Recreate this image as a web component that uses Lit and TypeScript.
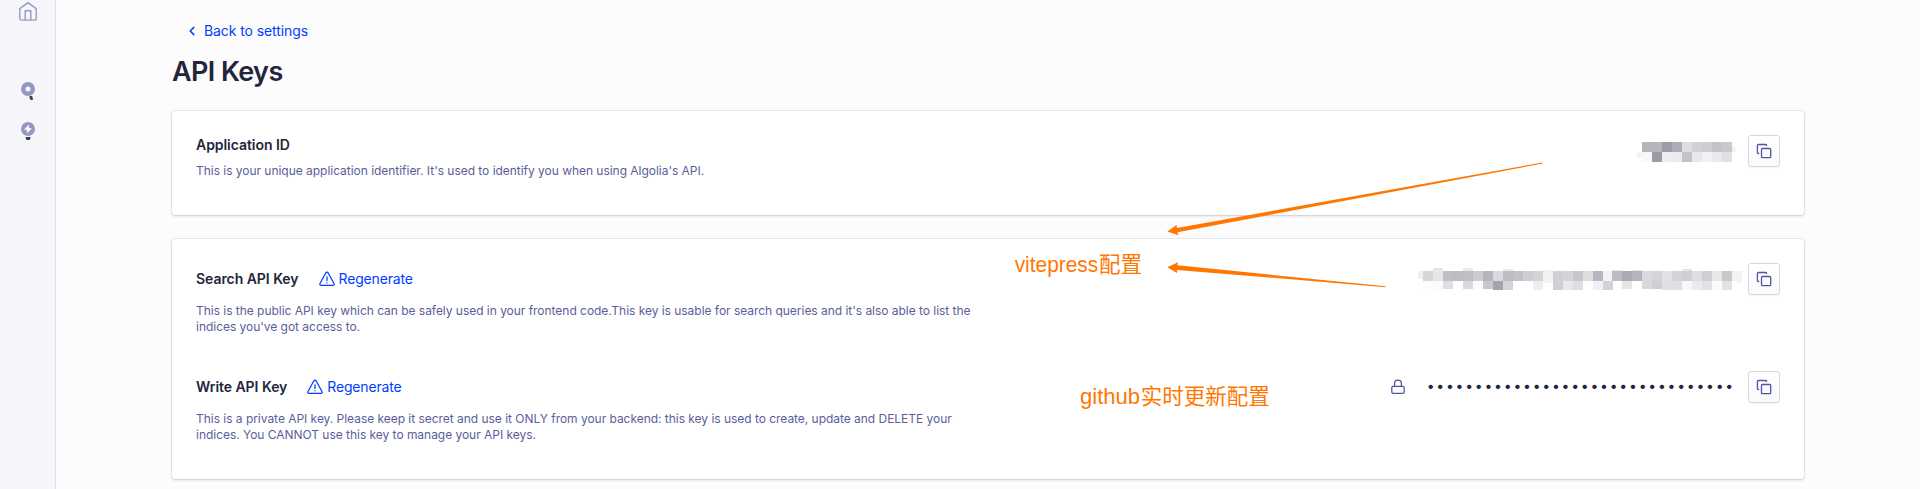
import { LitElement, html, svg, css } from "lit";
import { customElement, property } from "lit/decorators.js";

type Cell = [x: number, y: number, w: number, h: number, fill: string];

const row = (x: number, y: number, h: number, fills: string): Cell[] =>
  fills
    .split(" ")
    .map((f, i): Cell => [x + i * 10, y, 10, h, f])
    .filter((c) => c[4] !== "-")
    .map((c): Cell => [c[0], c[1], c[2], c[3], "#" + c[4]]);

const APP_ID_CELLS: Cell[] = [
  ...row(5, 0, 10, "b5b6bb b6b6c2 9c9ba8 adadb7 dedee1 d0d0d5 cdcdd2 c3c3c9 cacace"),
  ...row(5, 10, 9.5, "f8f8f8 9b9ba8 ededef ebebee c2c3c8 e8e8eb f1f1f3 eaeaed e0e0e2"),
  [0, 10, 5, 6, "#f4f4f4"],
  [95, 4, 3, 6, "#f0f0f0"],
  [98, 8, 2, 2, "#f4f4f4"],
];

const SEARCH_KEY_CELLS: Cell[] = [
  [0, 3, 5, 8, "#efeff0"],
  ...row(5, 3, 10, "d5d6da e5e6e8 bfc0c6 bcbdc4 bebfc4 cbccd0 b5b5bf d9d8de bdbec3 c2c1c9 cdced2 d3d4d8 f2f2f2 cfcfd4 d4d4d8 c6c7cb dcddde b7b7c2 f0f2f4"),
  ...row(194, 3, 10, "bbbcc2 abaab5 b5b4be d9d9de d3d4d8 e2e2e4 d3d2d8 cfcfd4 dedee0 cfcfd3 e8e8ea c8c8cd f3f3f3"),
  ...row(5, 13, 8, "fcfcfc fafafa dedfe1 - d8d8dd fcfcfc c8c7cd"),
  ...row(75, 13, 9, "a3a2ae d4d3d9 - - eeeef0 - cfcfd4 e8e8ea dddee0 - eff0f2 d2d2d7"),
  ...row(204, 13, 8, "e6e6e9 - d8d8dc cdcdd2"),
  ...row(244, 13, 9, "e0e0e2 dfdfe1 f9f9f9 ebebec e2e2e5 fafafa e2e2e4"),
  [15, 0, 10, 3, "#e5e6e8"],
  [45, 0, 10, 3, "#e9e9eb"],
  [85, 1, 10, 2, "#ebebed"],
  [125, 2, 10, 1, "#f4f4f4"],
  [125, 13, 10, 2, "#f4f4f4"],
  [194, 2, 10, 1, "#e4e4e6"],
  [214, 2, 10, 1, "#e4e4e6"],
  [264, 1, 10, 2, "#e6e6e8"],
  [319, 13, 5, 2, "#f8f8f8"],
];

const copyIcon = svg`<svg class="icon" width="16" height="16" viewBox="0 0 16 16" fill="none" stroke="#5055a0" stroke-width="1.3" stroke-linejoin="round" stroke-linecap="round">
  <rect x="5.500" y="5.500" width="9.200" height="9.200" rx="1"/>
  <path d="M2.700 10.500H2.400A1 1 0 0 1 1.400 9.500V2.500A1 1 0 0 1 2.400 1.500h7.200a1 1 0 0 1 1 1"/></svg>`;

const warnIcon = svg`<svg class="icon" width="16" height="16" viewBox="0 0 16 16" fill="none" stroke="#003dff" stroke-width="1.25" stroke-linejoin="round" stroke-linecap="round">
  <path d="M6.900 1.800 1 12.500a1.200 1.200 0 0 0 1 1.900h12a1.200 1.200 0 0 0 1-1.900L9.100 1.800a1.300 1.300 0 0 0-2.200 0zM8 5.800v3.600M8 11.700v.1"/></svg>`;

const lockIcon = svg`<svg class="icon" width="16" height="16" viewBox="0 0 16 16" fill="none" stroke="#5055a0" stroke-width="1.25" stroke-linejoin="round" stroke-linecap="round">
  <rect x="1.800" y="7.300" width="12.400" height="7.100" rx="1.300"/><path d="M4.600 7.300V4.400a3.400 3.400 0 0 1 6.800 0v2.900"/></svg>`;

@customElement("pixel-mask")
class PixelMask extends LitElement {
  @property({ attribute: false }) cells: Cell[] = [];
  @property({ type: Number }) w = 100;
  @property({ type: Number }) h = 20;
  static styles = css`
    :host { display: block; }
    svg { display: block; }
  `;
  render() {
    return html`<svg width=${this.w} height=${this.h} shape-rendering="crispEdges">
      ${this.cells.map((c) => svg`<rect x=${c[0]} y=${c[1]} width=${c[2]} height=${c[3]} fill=${c[4]}/>`)}
    </svg>`;
  }
}

@customElement("app-root")
class AppRoot extends LitElement {
  static styles = css`
    :host {
      display: flex;
      position: relative;
      width: 1920px;
      height: 489px;
      overflow: hidden;
      background: #fcfcfd;
      font-family: Inter, "Noto Sans CJK SC", sans-serif;
      color: #23263b;
    }
    * { box-sizing: border-box; }
    svg { display: block; flex: none; }
    .side {
      width: 56px;
      flex: none;
      background: #f5f5fa;
      border-right: 1px solid #dfdfeb;
      display: flex;
      flex-direction: column;
      align-items: center;
      padding-top: 1px;
    }
    .home { margin-bottom: 60px; }
    .magnify { margin-bottom: 20px; }
    main { flex: 1; padding: 20px 0 0 116px; }
    .back {
      display: flex;
      align-items: center;
      gap: 8px;
      height: 22px;
      padding-left: 16px;
      font-size: 14px;
      line-height: 20px;
      letter-spacing: -0.09px;
      color: #003dff;
    }
    .back span { padding-bottom: 1px; }
    h1 {
      margin: 13px 0 22px;
      font-size: 27px;
      line-height: 34px;
      font-weight: 600;
      letter-spacing: -0.6px;
    }
    .card {
      width: 1632px;
      background: #fff;
      border-radius: 3px;
      box-shadow: 0 0 0 1px rgba(35, 38, 59, 0.06), 0 1px 3px rgba(35, 38, 59, 0.18);
      padding: 0 24px;
      margin-bottom: 24px;
    }
    .app { height: 104px; padding-top: 24px; }
    .keys { height: 240px; padding-top: 24px; }
    .row { display: flex; height: 108px; }
    .info { width: 780px; }
    .head { display: flex; align-items: center; height: 32px; }
    .app .head { height: 20px; }
    h2 { margin: 0; font-size: 14px; line-height: 20px; font-weight: 600; letter-spacing: -0.05px; }
    .regen {
      display: flex;
      align-items: center;
      gap: 4px;
      margin-left: 20px;
      color: #003dff;
      font-size: 14px;
      line-height: 20px;
      letter-spacing: -0.16px;
    }
    p { margin: 8px 0 0; font-size: 12px; line-height: 16px; letter-spacing: -0.031px; color: #5a5e9a; white-space: nowrap; }
    .value { margin-left: auto; height: 32px; display: flex; align-items: center; }
    .copy {
      width: 32px;
      height: 32px;
      border: 1px solid #d6d6e7;
      border-radius: 3px;
      background: linear-gradient(#fff, #fafafd);
      box-shadow: 0 1px 1px rgba(35, 38, 59, 0.05);
      display: grid;
      place-items: center;
      padding: 0;
    }
    .id-mask { margin-right: 11px; padding-top: 2px; }
    .key-mask { margin-right: 5px; padding-top: 1px; }
    .dots { font-size: 14px; line-height: 20px; letter-spacing: 1.760px; margin: 0 13px 0 21px; padding-bottom: 3px; white-space: nowrap; }
    .notes { position: absolute; left: 0; top: 0; pointer-events: none; fill: #ff7700; font-size: 21.500px; font-family: "Liberation Sans", sans-serif; }
    .cjk { font-family: "Noto Sans CJK SC", sans-serif; }
  `;

  private copy() {
    return html`<button class="copy" aria-label="Copy">${copyIcon}</button>`;
  }

  render() {
    return html`
      <nav class="side">
        <svg class="home" width="20" height="20" viewBox="0 0 20 20" fill="none" stroke="#9698c3" stroke-width="1.400" stroke-linejoin="round" stroke-linecap="round">
          <path d="M1.800 7.600 10 1.600l8.200 6v9.600a1.900 1.900 0 0 1-1.900 1.900H3.700a1.900 1.900 0 0 1-1.900-1.900zM7.200 18.800V9.700h5.600v9.100"/>
        </svg>
        <svg class="magnify" width="16" height="20" viewBox="0 0 16 20">
          <circle cx="8" cy="8" r="4.750" fill="none" stroke="#9698c3" stroke-width="4.500"/>
          <path d="M9 15.600 12 14.800 13.200 18.400 10.800 19.300z" fill="#36395a"/>
        </svg>
        <svg width="16" height="20" viewBox="0 0 16 20">
          <circle cx="8" cy="8" r="7" fill="#9698c3"/>
          <path d="M9 3.400 3.900 8.700H7l-.2 3.900 5.200-5.300H8.900z" fill="#fff"/>
          <path d="M5.700 16h4.800v1l-.9 2H6.600l-.9-2z" fill="#36395a"/>
        </svg>
      </nav>
      <main>
        <div class="back">
          <svg width="8" height="12" viewBox="0 0 8 12" fill="none" stroke="#003dff" stroke-width="1.500" stroke-linecap="round" stroke-linejoin="round"><path d="M5.800 2.400 2.200 6 5.800 9.600"/></svg>
          <span>Back to settings</span>
        </div>
        <h1>API Keys</h1>
        <section class="card app">
          <div class="row">
            <div class="info">
              <div class="head"><h2>Application ID</h2></div>
              <p>This is your unique application identifier. It's used to identify you when using Algolia's API.</p>
            </div>
            <div class="value">
              <pixel-mask class="id-mask" .cells=${APP_ID_CELLS} .w=${100} .h=${20}></pixel-mask>
              ${this.copy()}
            </div>
          </div>
        </section>
        <section class="card keys">
          <div class="row">
            <div class="info">
              <div class="head"><h2>Search API Key</h2><span class="regen">${warnIcon}<span>Regenerate</span></span></div>
              <p>This is the public API key which can be safely used in your frontend code.This key is usable for search queries and it's also able to list the<br />indices you've got access to.</p>
            </div>
            <div class="value">
              <pixel-mask class="key-mask" .cells=${SEARCH_KEY_CELLS} .w=${325} .h=${23}></pixel-mask>
              ${this.copy()}
            </div>
          </div>
          <div class="row">
            <div class="info">
              <div class="head"><h2>Write API Key</h2><span class="regen">${warnIcon}<span>Regenerate</span></span></div>
              <p>This is a private API key. Please keep it secret and use it ONLY from your backend: this key is used to create, update and DELETE your<br />indices. You CANNOT use this key to manage your API keys.</p>
            </div>
            <div class="value">
              ${lockIcon}
              <span class="dots">${"•".repeat(32)}</span>
              ${this.copy()}
            </div>
          </div>
        </section>
      </main>
      <svg class="notes" width="1920" height="489" viewBox="0 0 1920 489">
        <path d="M1167.300 231.500 1176.500 225 1177 228 1542.500 162.500 1542.700 163.500 1177.500 232.300 1178.500 235.200z"/>
        <path d="M1167.300 267.200 1178 262.300 1177.500 265.300 1385.400 286.300 1385.300 287.200 1177.200 269.900 1177 273z"/>
        <text x="1014.700" y="272" textLength="83.500" lengthAdjust="spacingAndGlyphs">vitepress</text>
        <text class="cjk" x="1099" y="272">配置</text>
        <text x="1080" y="404" textLength="60" lengthAdjust="spacingAndGlyphs">github</text>
        <text class="cjk" x="1140.700" y="404">实时更新配置</text>
      </svg>
    `;
  }
}
